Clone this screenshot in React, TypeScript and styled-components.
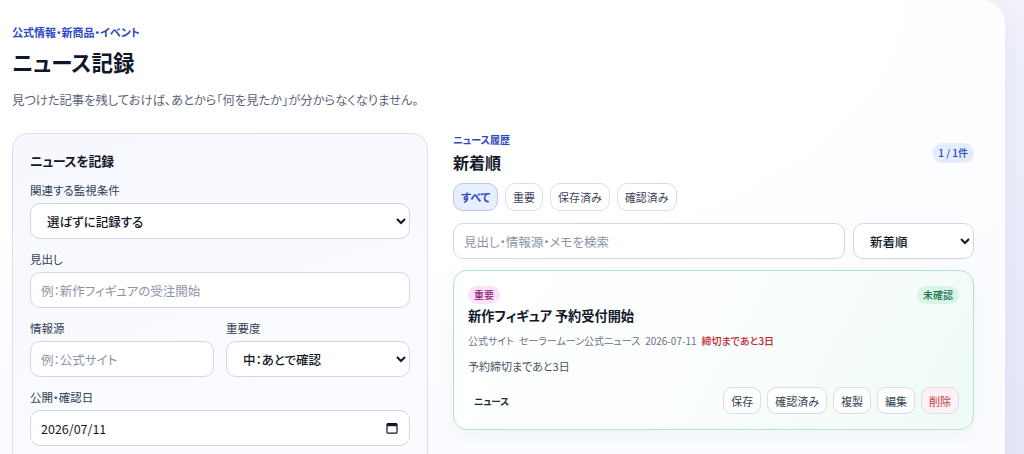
import React from "react";
import styled, { createGlobalStyle } from "styled-components";

const Global = createGlobalStyle`
  html, body { margin: 0; padding: 0; }
  body {
    background: linear-gradient(180deg, #f1f2fb 0%, #e6e9fa 100%);
    font-family: "Noto Sans CJK JP", "Noto Sans", sans-serif;
    font-feature-settings: "palt";
    color: #0f172a;
    overflow: hidden;
  }
  * { box-sizing: border-box; }
  input, select, button { font-family: inherit; font-feature-settings: "palt"; }
`;

const Page = styled.div`
  padding-right: 19px;
  min-height: 100vh;
`;

const Panel = styled.main`
  min-height: 480px;
  background:
    radial-gradient(ellipse 900px 420px at 30% 0%, #ffffff 60%, #fbfcff 100%);
  border-top-right-radius: 24px;
  box-shadow: 0 10px 30px rgba(70, 80, 160, 0.08);
  padding: 24px 31px 0 12px;
`;

const Eyebrow = styled.div<{ $small?: boolean }>`
  color: #2f47c4;
  font-size: ${(p) => (p.$small ? "10px" : "11px")};
  line-height: ${(p) => (p.$small ? "14px" : "16px")};
  font-weight: 700;
`;

const Title = styled.h1`
  margin: 7px 0 0;
  font-size: 21.5px;
  line-height: 30px;
  font-weight: 700;
  color: #0f172a;
`;

const Lead = styled.p`
  margin: 14px 0 0;
  font-size: 12.3px;
  line-height: 18px;
  color: #5b6577;
`;

const Grid = styled.div`
  display: grid;
  grid-template-columns: 416px 1fr;
  gap: 25px;
  margin-top: 24px;
  align-items: start;
`;

const FormCard = styled.section`
  border: 1px solid #d8dfee;
  border-radius: 16px;
  background: linear-gradient(160deg, #f6f8fe 0%, #f9fbff 60%, #fbfcff 100%);
  padding: 17px 17px 24px;
  display: flex;
  flex-direction: column;
`;

const CardTitle = styled.h2`
  margin: 0 0 11px;
  font-size: 12.8px;
  letter-spacing: -0.2px;
  line-height: 20px;
  font-weight: 700;
  color: #111827;
`;

const Fields = styled.div`
  display: flex;
  flex-direction: column;
  gap: 12px;
`;

const Row = styled.div`
  display: grid;
  grid-template-columns: 1fr 1fr;
  gap: 12px;
`;

const Field = styled.label`
  display: flex;
  flex-direction: column;
`;

const Label = styled.span`
  font-size: 11.5px;
  line-height: 17px;
  color: #334155;
  margin-bottom: 4px;
`;

const controlCss = `
  height: 36px;
  border: 1px solid #cfd7e7;
  border-radius: 10px;
  background: #ffffff;
  font-size: 12.5px;
  color: #111827;
  padding: 0 10px;
  outline: none;
  width: 100%;
`;

const Select = styled.select`
  ${controlCss}
  padding-left: 12px;
  font-weight: 500;
`;

const Input = styled.input`
  ${controlCss}
  &::placeholder { color: #8b94a5; }
`;

const DateWrap = styled.div`
  position: relative;
`;

const CalIcon = styled.svg`
  position: absolute;
  right: 12px;
  top: 12px;
  width: 12px;
  height: 12px;
  pointer-events: none;
`;

const Side = styled.section`
  display: flex;
  flex-direction: column;
`;

const SideHead = styled.div`
  display: flex;
  justify-content: space-between;
  align-items: center;
`;

const SideTitle = styled.h2`
  margin: 4px 0 0;
  font-size: 16px;
  line-height: 22px;
  font-weight: 700;
  color: #111827;
`;

const Count = styled.span`
  background: #e5ecfd;
  color: #2f47c4;
  font-size: 10px;
  line-height: 20px;
  padding: 0 6px;
  border-radius: 10px;
  font-weight: 500;
`;

const Chips = styled.div`
  display: flex;
  gap: 7px;
  margin-top: 10px;
`;

const Chip = styled.button<{ $active?: boolean }>`
  height: 28px;
  padding: 0 7px;
  border-radius: 10px;
  border: 1px solid ${(p) => (p.$active ? "#b7c8ee" : "#d8dfec")};
  background: ${(p) => (p.$active ? "#e7eefd" : "#ffffff")};
  color: ${(p) => (p.$active ? "#2f47c4" : "#3b4558")};
  font-size: 11px;
  font-weight: ${(p) => (p.$active ? 600 : 400)};
`;

const SearchRow = styled.div`
  display: grid;
  grid-template-columns: 1fr 121px;
  gap: 8px;
  margin-top: 12px;
`;

const NewsCard = styled.article`
  margin-top: 11px;
  border: 1px solid #b4e2cb;
  border-radius: 14px;
  background: linear-gradient(120deg, #ffffff 0%, #fbfefd 45%, #f0fbf5 100%);
  box-shadow: 0 6px 16px rgba(60, 140, 100, 0.06);
  padding: 15px 14px 15px 14px;
  display: flex;
  flex-direction: column;
`;

const TopRow = styled.div`
  display: flex;
  justify-content: space-between;
`;

const Badge = styled.span<{ $tone: "pink" | "green" }>`
  height: 18px;
  line-height: 18px;
  padding: 0 6px;
  border-radius: 9px;
  font-size: 10px;
  font-weight: 500;
  background: ${(p) => (p.$tone === "pink" ? "#fae2f7" : "#d9f4e8")};
  color: ${(p) => (p.$tone === "pink" ? "#8a2784" : "#1d7049")};
`;

const NewsTitle = styled.h3`
  margin: 2px 0 0;
  font-size: 13.2px;
  line-height: 20px;
  font-weight: 700;
  color: #111827;
`;

const Meta = styled.div`
  margin-top: 7px;
  font-size: 10px;
  line-height: 16px;
  color: #6b7384;
  display: flex;
  gap: 5px;
`;

const Due = styled.span`
  color: #c0262f;
  font-weight: 500;
`;

const Note = styled.p`
  margin: 9px 0 0;
  font-size: 11px;
  line-height: 16px;
  color: #4b5363;
`;

const Footer = styled.div`
  margin-top: 13px;
  display: flex;
  justify-content: space-between;
  align-items: center;
`;

const Kind = styled.span`
  padding-left: 6px;
  font-size: 9.5px;
  font-weight: 700;
  color: #1f2937;
`;

const Actions = styled.div`
  display: flex;
  gap: 6px;
`;

const Action = styled.button<{ $danger?: boolean }>`
  height: 27px;
  padding: 0 7px;
  border-radius: 9px;
  border: 1px solid #d6ddeb;
  background: ${(p) => (p.$danger ? "#fdf0f2" : "#ffffff")};
  color: ${(p) => (p.$danger ? "#c33a44" : "#364152")};
  font-size: 11px;
`;

export default function App() {
  return (
    <Page>
      <Global />
      <Panel>
        <Eyebrow>公式情報・新商品・イベント</Eyebrow>
        <Title>ニュース記録</Title>
        <Lead>見つけた記事を残しておけば、あとから「何を見たか」が分からなくなりません。</Lead>
        <Grid>
          <FormCard>
            <CardTitle>ニュースを記録</CardTitle>
            <Fields>
              <Field>
                <Label>関連する監視条件</Label>
                <Select defaultValue="none">
                  <option value="none">選ばずに記録する</option>
                </Select>
              </Field>
              <Field>
                <Label>見出し</Label>
                <Input placeholder="例：新作フィギュアの受注開始" />
              </Field>
              <Row>
                <Field>
                  <Label>情報源</Label>
                  <Input placeholder="例：公式サイト" />
                </Field>
                <Field>
                  <Label>重要度</Label>
                  <Select defaultValue="mid">
                    <option value="mid">中：あとで確認</option>
                  </Select>
                </Field>
              </Row>
              <Field>
                <Label>公開・確認日</Label>
                <DateWrap>
                  <Input defaultValue="2026/07/11" />
                  <CalIcon viewBox="0 0 12 12" aria-hidden="true">
                    <rect x="1" y="1.6" width="10" height="9.6" rx="1" fill="none" stroke="#111827" strokeWidth="1.2" />
                    <rect x="1" y="1.6" width="10" height="2.6" fill="#111827" />
                  </CalIcon>
                </DateWrap>
              </Field>
            </Fields>
          </FormCard>
          <Side>
            <SideHead>
              <div>
                <Eyebrow $small>ニュース履歴</Eyebrow>
                <SideTitle>新着順</SideTitle>
              </div>
              <Count>1 / 1件</Count>
            </SideHead>
            <Chips>
              <Chip $active>すべて</Chip>
              <Chip>重要</Chip>
              <Chip>保存済み</Chip>
              <Chip>確認済み</Chip>
            </Chips>
            <SearchRow>
              <Input placeholder="見出し・情報源・メモを検索" />
              <Select defaultValue="new">
                <option value="new">新着順</option>
              </Select>
            </SearchRow>
            <NewsCard>
              <TopRow>
                <Badge $tone="pink">重要</Badge>
                <Badge $tone="green">未確認</Badge>
              </TopRow>
              <NewsTitle>新作フィギュア 予約受付開始</NewsTitle>
              <Meta>
                <span>公式サイト</span>
                <span>セーラームーン公式ニュース</span>
                <span>2026-07-11</span>
                <Due>締切まであと3日</Due>
              </Meta>
              <Note>予約締切まであと3日</Note>
              <Footer>
                <Kind>ニュース</Kind>
                <Actions>
                  <Action>保存</Action>
                  <Action>確認済み</Action>
                  <Action>複製</Action>
                  <Action>編集</Action>
                  <Action $danger>削除</Action>
                </Actions>
              </Footer>
            </NewsCard>
          </Side>
        </Grid>
      </Panel>
    </Page>
  );
}
